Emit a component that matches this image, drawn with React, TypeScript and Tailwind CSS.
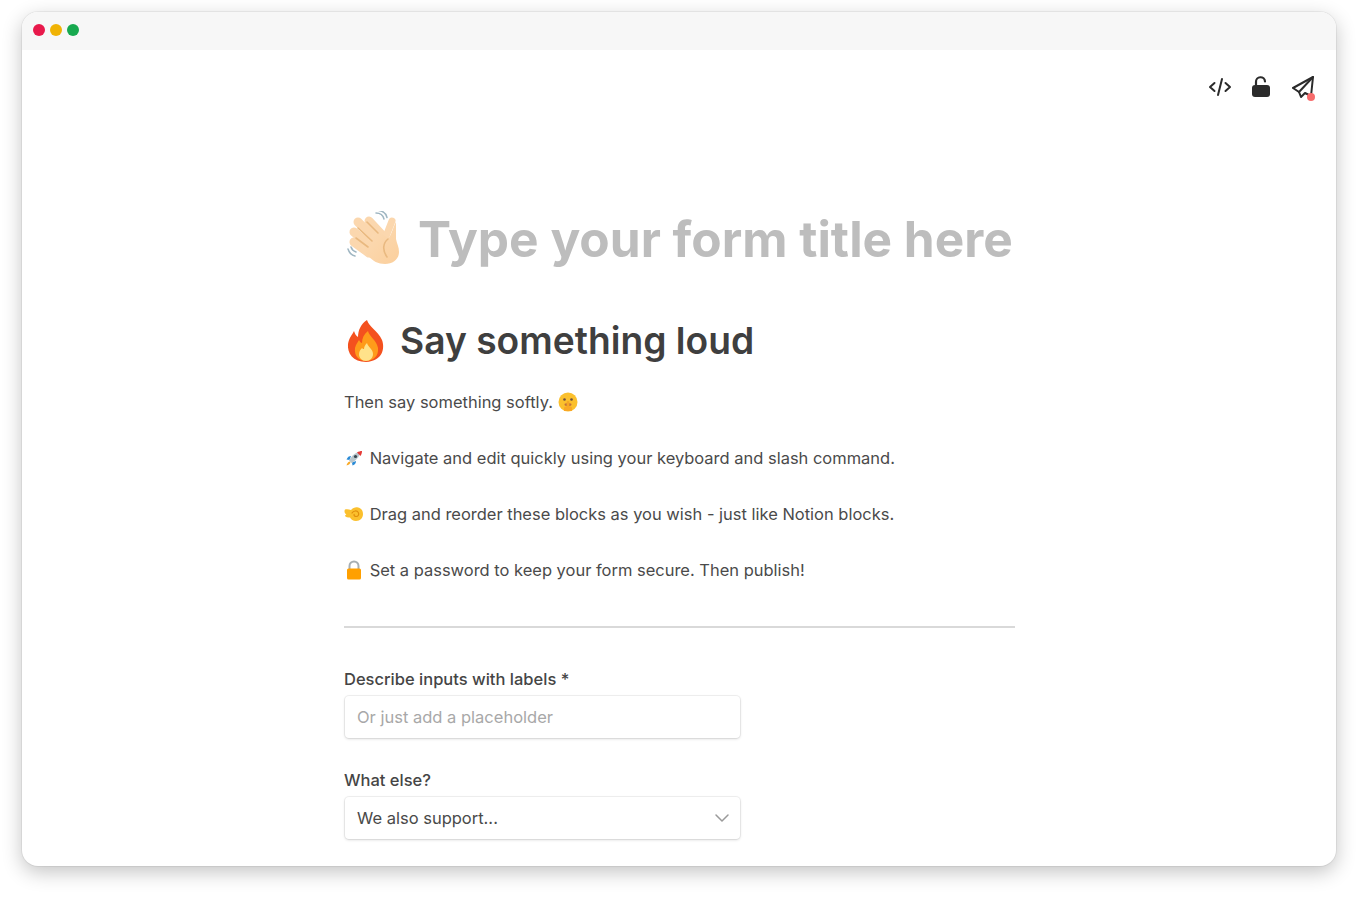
import React from "react";

const Wave = () => (
  <svg viewBox="0 0 56 56" className="ml-[3px] h-[56px] w-[56px] shrink-0">
    <defs>
      <linearGradient id="hand" x1="0" y1="0" x2="1" y2="1">
        <stop offset="0" stopColor="#fbdcb8" />
        <stop offset="1" stopColor="#fbcf9c" />
      </linearGradient>
    </defs>
    <g fill="none" stroke="#9fb6c2" strokeWidth="1.500" strokeLinecap="round">
      <path d="M29 2c4 0 7 2 8 6" />
      <path d="M32 -.5c4 .5 7 3 8 7" />
      <path d="M1 38c1 3 3 6 7 7" />
      <path d="M4 36c1 3 2 4 5 5" />
    </g>
    <g stroke="#fbd7ae" strokeWidth="9" strokeLinecap="round">
      <path d="M22 10l13 14" />
      <path d="M11 11l19 19" />
      <path d="M7 21l18 15" />
      <path d="M7 31l15 11" />
    </g>
    <path d="M45 10l-7 18" stroke="#fbd7ae" strokeWidth="7" strokeLinecap="round" />
    <path d="M30 20c5 3 8 4 11 8 4-5 5-12 8-17l0 17c1 5 3 8 3 13 0 7-6 12-14 12-7 0-12-3-17-8L14 36z" fill="url(#hand)" />
    <g fill="none" stroke="#e9b980" strokeWidth="1.600" strokeLinecap="round">
      <path d="M20 11l11 11" />
      <path d="M11 17l14 13" />
      <path d="M9 27l12 9" />
      <path d="M41 28c-5 4-6 11-1 18" />
    </g>
  </svg>
);

const Fire = () => (
  <svg viewBox="0 0 40 44" className="ml-[2px] h-[44px] w-[40px] shrink-0">
    <path d="M21 1c2 7 11 11 15 20 3 8 1 21-16 22C7 43 1 34 2 25c1-6 4-9 6-13 1 3 2 5 4 6 0-7 3-13 9-17z" fill="#f4511e" />
    <path d="M22 12c1 5 9 10 10 17 1 8-5 13-12 13S8 37 9 29c1-4 3-6 4-8 1 2 2 3 3 3 0-5 2-9 6-12z" fill="#ff9b1a" />
    <path d="M21 24c1 4 6 6 6 11 0 4-3 7-7 7s-7-3-7-7c0-3 2-5 3-6 1 1 1 1 2 1 0-2 1-4 3-6z" fill="#ffe28a" />
  </svg>
);

const Shush = () => (
  <svg viewBox="0 0 20 20" className="inline-block h-[20px] w-[20px] align-[-4px]">
    <circle cx="10" cy="10" r="9.500" fill="#fbc02d" />
    <circle cx="6.500" cy="7.500" r="1.300" fill="#6d4c41" />
    <circle cx="13.500" cy="7.500" r="1.300" fill="#6d4c41" />
    <ellipse cx="10" cy="12.500" rx="3.500" ry="1.500" fill="#c2703d" />
    <rect x="8.600" y="9" width="2.800" height="7" rx="1.400" fill="#f6a623" />
    <path d="M6 15.500c2-1.600 6-1.600 8 0v3.500H6z" fill="#f9a825" />
  </svg>
);

const Rocket = () => (
  <svg viewBox="0 0 20 20" className="inline-block h-[20px] w-[20px] align-[-4px]">
    <path d="M7 8C5 8 3.500 9 2.500 11.500l3 .5z" fill="#2b8bd6" />
    <path d="M12 13c0 2-1 3.500-3.500 4.500l-.5-3z" fill="#2b8bd6" />
    <path d="M5.500 13.500c-1.500.5-2.500 2-3 4 2-.5 3.500-1.500 4-3z" fill="#f9a825" />
    <path d="M13 4.500c-3.500 1.500-6 4.500-8 8l2.500 2.500c3.500-2 6.500-4.500 8-8l-.5-2z" fill="#b9c6cc" />
    <path d="M13 4.500c1.500-1 3.500-1.500 5-1.500 0 1.500-.5 3.500-1.500 5z" fill="#e53935" />
    <circle cx="11.500" cy="8.500" r="1.600" fill="#37474f" />
  </svg>
);

const Pinch = () => (
  <svg viewBox="0 0 20 20" className="inline-block h-[20px] w-[20px] align-[-4px]">
    <path d="M1 5.500c2-.5 4-.2 6 .5C9 3.800 11.500 3 14 3.500c3.200.6 5 3.200 5 6.500 0 4-2.800 7-7 7-3 0-4.800-1.300-6-3.500C4 13.800 2.500 13.500 1.500 12.500c-.7-.8-.3-1.800 1-2 .3 0-1.200-.5-1.700-1.800-.5-1.200-.3-2.600.2-3.200z" fill="#fbc02d" />
    <path d="M8 9c1.500-2.500 5-2.700 6.300-.5 1 1.800 0 4-2.200 4-1.400 0-2.300-1-2-2.200" fill="none" stroke="#e08e0b" strokeWidth="1.200" strokeLinecap="round" />
  </svg>
);

const Lock = () => (
  <svg viewBox="0 0 20 20" className="inline-block h-[20px] w-[20px] align-[-4px]">
    <path d="M5.500 9V6a4.500 4.500 0 0 1 9 0v3" fill="none" stroke="#a7afb3" strokeWidth="2" />
    <rect x="3" y="8.500" width="14" height="11" rx="1.500" fill="#ffa000" />
  </svg>
);

const Line = ({ children }: { children: React.ReactNode }) => (
  <p className="h-[32px] leading-[32px]">{children}</p>
);

export default function App() {
  return (
    <div className="h-[897px] w-[1357px] overflow-hidden bg-white pl-[22px] pt-[12px] font-['Inter',sans-serif]">
      <div className="h-[854px] w-[1314px] overflow-hidden rounded-[16px] bg-white shadow-[0_0_0_1px_rgba(0,0,0,0.05),0_6px_20px_rgba(0,0,0,0.24)]">
        <div className="flex h-[38px] items-center gap-[5px] bg-[#f7f7f7] pb-[2px] pl-[11px]">
          <span className="h-[12px] w-[12px] rounded-full bg-[#e8194b]" />
          <span className="h-[12px] w-[12px] rounded-full bg-[#f0b305]" />
          <span className="h-[12px] w-[12px] rounded-full bg-[#17a94f]" />
        </div>
        <div className="flex h-[74px] items-center justify-end gap-[17px] pr-[22px]">
          <svg viewBox="0 0 24 24" className="h-[24px] w-[24px]" fill="none" stroke="#2b2b2b" strokeWidth="2" strokeLinecap="round" strokeLinejoin="round">
            <path d="M6.500 8 2 12l4.500 4" />
            <path d="M17.500 8 22 12l-4.500 4" />
            <path d="M14 4l-4 16" />
          </svg>
          <svg viewBox="0 0 24 24" className="h-[24px] w-[24px]" fill="#2b2b2b">
            <path d="M7 10V7a4.500 4.500 0 0 1 9-.5" fill="none" stroke="#2b2b2b" strokeWidth="2.200" strokeLinecap="round" />
            <rect x="3" y="10" width="18" height="12" rx="3" />
          </svg>
          <div className="relative h-[24px] w-[24px]">
            <svg viewBox="0 0 24 24" className="h-[24px] w-[24px]" fill="none" stroke="#2b2b2b" strokeWidth="2" strokeLinecap="round" strokeLinejoin="round">
              <path d="M23 2 3 13l6 4 2 5 4-4 6 3z" />
              <path d="M23 2 9 17" />
            </svg>
            <span className="absolute bottom-[-2px] right-[-1px] h-[8px] w-[8px] rounded-full bg-[#f76c6c]" />
          </div>
        </div>
        <div className="ml-[322px] w-[671px]">
          <h1 className="mt-[85px] flex h-[60px] items-center gap-[16px] text-[49.600px] font-bold leading-[60px] text-[#bdbdbd]">
            <Wave />
            <span className="ml-[-1px]">Type your form title here</span>
          </h1>
          <h2 className="mt-[48px] flex h-[48px] items-center gap-[14px] text-[37.200px] font-semibold leading-[48px] text-[#3f3f3f]">
            <Fire />
            <span>Say something loud</span>
          </h2>
          <div className="mt-[21px] flex flex-col gap-[24px] text-[16.480px] text-[#4a4a4a]">
            <Line>Then say something softly. <Shush /></Line>
            <Line><Rocket /> <span className="ml-[1px]">Navigate and edit quickly using your keyboard and slash command.</span></Line>
            <Line><Pinch /> <span className="ml-[1px]">Drag and reorder these blocks as you wish - just like Notion blocks.</span></Line>
            <Line><Lock /> <span className="ml-[1px]">Set a password to keep your form secure. Then publish!</span></Line>
          </div>
          <hr className="mt-[40px] border-0 border-t-[2px] border-[#d9d9d9]" />
          <label className="mt-[39px] block h-[24px] text-[16.500px] font-medium leading-[24px] text-[#454545]">Describe inputs with labels *</label>
          <div className="ml-[1px] mt-[5px] flex h-[42px] w-[395px] items-center rounded-[4px] bg-white px-[12px] text-[16.500px] text-[#a8a8a8] shadow-[0_0_0_1px_rgba(0,0,0,0.05),0_1px_3px_rgba(0,0,0,0.15)]">Or just add a placeholder</div>
          <label className="mt-[30px] block h-[24px] text-[16.500px] font-medium leading-[24px] text-[#454545]">What else?</label>
          <div className="ml-[1px] mt-[5px] flex h-[42px] w-[395px] items-center justify-between rounded-[4px] bg-white pl-[12px] pr-[10px] text-[16.500px] text-[#4a4a4a] shadow-[0_0_0_1px_rgba(0,0,0,0.05),0_1px_3px_rgba(0,0,0,0.15)]">
            <span>We also support...</span>
            <svg viewBox="0 0 16 16" className="h-[16px] w-[16px]" fill="none" stroke="#9a9a9a" strokeWidth="1.500" strokeLinecap="round" strokeLinejoin="round">
              <path d="M2 5l6 6 6-6" />
            </svg>
          </div>
        </div>
      </div>
    </div>
  );
}
